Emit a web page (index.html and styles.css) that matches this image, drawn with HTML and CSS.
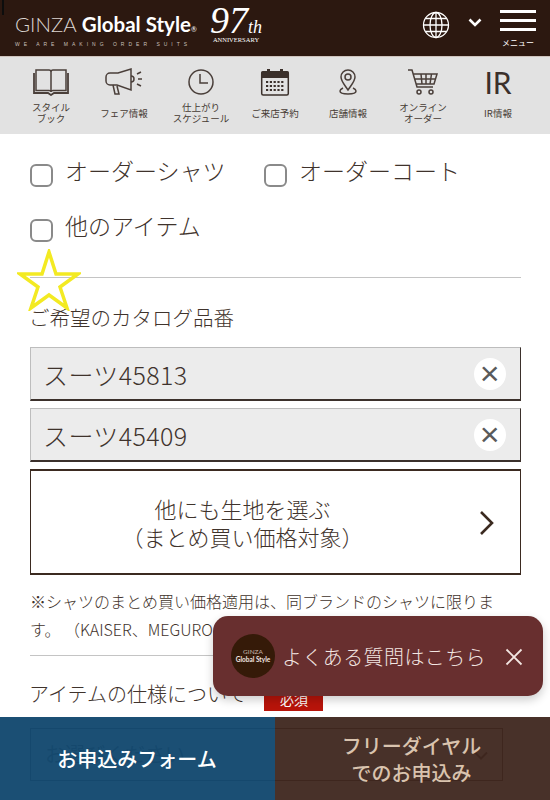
FILE: index.html
```html
<!DOCTYPE html>
<html lang="ja">
<head>
    <meta charset="UTF-8">
    <meta name="viewport" content="width=device-width, initial-scale=1.0">
    <title>GINZA Global Style</title>
    <link rel="stylesheet" href="styles.css">
</head>
<body>
    <header class="site-header">
        <div class="logo">
            <div class="logo-name"><span class="logo-thin">GINZA</span> <b>Global Style</b><small>®</small></div>
            <div class="logo-tag">WE ARE MAKING ORDER SUITS</div>
        </div>
        <div class="anniv">
            <div class="anniv-num">97<i>th</i></div>
            <div class="anniv-text">ANNIVERSARY</div>
        </div>
        <div class="header-right">
            <svg class="globe" viewBox="0 0 28 28" fill="none" stroke="#fff" stroke-width="1.3">
                <circle cx="14" cy="14" r="12.5"/>
                <ellipse cx="14" cy="14" rx="6" ry="12.5"/>
                <path d="M14 1.5v25M1.5 14h25M3.4 7.5h21.2M3.4 20.5h21.2"/>
            </svg>
            <svg class="caret" viewBox="0 0 14 10" fill="none" stroke="#fff" stroke-width="2.6">
                <path d="M1.5 1.5 7 7l5.500-5.500"/>
            </svg>
            <div class="menu-btn">
                <span></span><span></span><span></span>
                <em>メニュー</em>
            </div>
        </div>
    </header>

    <nav class="icon-nav">
        <a class="nav-item">
            <svg viewBox="0 0 36 28" fill="none" stroke="#4a3f3a" stroke-width="1.5">
                <path d="M3 2h13c1.500 0 2 1 2 2v20c0-1-.8-1.500-2-1.500H3zM33 2H20c-1.500 0-2 1-2 2v20c0-1 .8-1.500 2-1.500h13z"/>
                <path d="M1 5v20h14l3 2 3-2h14V5" stroke-width="1.800"/>
            </svg>
            <span>スタイル<br>ブック</span>
        </a>
        <a class="nav-item">
            <svg class="wide-icon" viewBox="0 0 40 28" fill="none" stroke="#4a3f3a" stroke-width="1.5">
                <path d="M27 1v21L13 17H6a4 4 0 0 1-4-4V9a4 4 0 0 1 4-4h8z"/>
                <path d="M9 17l2 9h4l-2-8M27 8c2 0 3 1 3 3s-1 3-3 3M33 6l4-2M34 11h4M33 16l4 2"/>
            </svg>
            <span>フェア情報</span>
        </a>
        <a class="nav-item">
            <svg viewBox="0 0 28 28" fill="none" stroke="#4a3f3a" stroke-width="1.5">
                <circle cx="14" cy="14" r="12"/>
                <path d="M13 6v9h8"/>
            </svg>
            <span>仕上がり<br>スケジュール</span>
        </a>
        <a class="nav-item">
            <svg viewBox="0 0 30 28">
                <path fill="#3b302b" d="M1 5a2 2 0 0 1 2-2h4V1h3v2h10V1h3v2h4a2 2 0 0 1 2 2v5H1z"/>
                <rect x="1.700" y="4" width="26.600" height="23" rx="1.500" fill="none" stroke="#3b302b" stroke-width="1.500"/>
                <path stroke="#3b302b" stroke-width="2.200" stroke-dasharray="2.200 1.600" d="M6 14h18M6 18h18M6 22h18"/>
            </svg>
            <span>ご来店予約</span>
        </a>
        <a class="nav-item">
            <svg viewBox="0 0 24 28" fill="none" stroke="#4a3f3a" stroke-width="1.500">
                <path d="M12 22C8 16 5 13 5 9a7 7 0 0 1 14 0c0 4-3 7-7 13z"/>
                <circle cx="12" cy="9" r="3"/>
                <path d="M7 20c-2 1-3 2-3 3 0 2 4 3 8 3s8-1 8-3c0-1-1-2-3-3"/>
            </svg>
            <span>店舗情報</span>
        </a>
        <a class="nav-item">
            <svg viewBox="0 0 32 28" fill="none" stroke="#4a3f3a" stroke-width="1.500">
                <path d="M1 2h4l5 17h16M6.500 6H30l-3 10H9.500M14 6l1 10M19 6v10M24.500 6l-1.500 10M8 11h20.500"/>
                <circle cx="12" cy="24" r="2"/>
                <circle cx="24" cy="24" r="2"/>
            </svg>
            <span>オンライン<br>オーダー</span>
        </a>
        <a class="nav-item">
            <div class="ir-mark">IR</div>
            <span>IR情報</span>
        </a>
    </nav>

    <main class="content">
        <div class="check-row">
            <label class="check check-wide"><i class="box"></i>オーダーシャツ</label>
            <label class="check"><i class="box"></i>オーダーコート</label>
        </div>
        <div class="check-row">
            <label class="check"><i class="box"></i>他のアイテム</label>
        </div>
        <hr class="rule rule-top">

        <h3 class="field-title">ご希望のカタログ品番</h3>
        <div class="picked">スーツ45813<span class="clear">×</span></div>
        <div class="picked">スーツ45409<span class="clear">×</span></div>
        <a class="more-btn">
            他にも生地を選ぶ<br>（まとめ買い価格対象）
            <svg viewBox="0 0 16 26" fill="none" stroke="#3b2a20" stroke-width="2.600">
                <path d="M2 2l11 11L2 24"/>
            </svg>
        </a>
        <p class="note">※シャツのまとめ買い価格適用は、同ブランドのシャツに限ります。 （KAISER、MEGURO、その他）</p>
        <hr class="rule">

        <div class="spec-title">アイテムの仕様について<span class="required">必須</span></div>
        <div class="select-box">
            お選びください
            <svg viewBox="0 0 14 10" fill="none" stroke="#3b302b" stroke-width="2">
                <path d="M1 1.500l6 6 6-6"/>
            </svg>
        </div>
    </main>

    <!-- overlays -->
    <svg class="star" viewBox="0 0 64 62" fill="none" stroke="#f3ea22" stroke-width="3.500">
        <path d="M32 3l7 22h22L43 38l7 21-18-13-18 13 7-21L3 25h22z"/>
    </svg>

    <div class="faq-pop">
        <div class="faq-logo"><span>GINZA</span><b>Global Style</b></div>
        <div class="faq-text">よくある質問はこちら</div>
        <svg class="faq-close" viewBox="0 0 18 18" fill="none" stroke="#f3e6e2" stroke-width="1.800">
            <path d="M1.500 1.500l15 15M16.500 1.500l-15 15"/>
        </svg>
    </div>

    <div class="bottom-bar">
        <a class="bar-btn bar-form">お申込みフォーム</a>
        <a class="bar-btn bar-tel">フリーダイヤル<br>でのお申込み</a>
    </div>
</body>
</html>
```

FILE: styles.css
```css
/* Reset and basic layout */
* {
    margin: 0;
    padding: 0;
    box-sizing: border-box;
}

body {
    font-family: "Noto Sans CJK JP", "Noto Sans", sans-serif;
    width: 550px;
    height: 800px;
    position: relative;
    overflow: hidden;
    background-color: #fff;
    color: #3f332c;
}

/* Header */
.site-header {
    height: 57px;
    background-color: #2c1810;
    color: #fff;
    display: flex;
    align-items: flex-start;
    padding-left: 15px;
    border-bottom: 1px solid #cfc4bd;
    position: relative;
}

.site-header::before {
    content: "";
    position: absolute;
    left: 2px;
    top: 0;
    width: 2px;
    height: 15px;
    background-color: #0d0d0d;
}

.logo {
    width: 190px;
    padding-top: 12px;
}

.logo-name {
    font-family: Lato, "Noto Sans", sans-serif;
    font-size: 20.500px;
    line-height: 24px;
    white-space: nowrap;
}

.logo-thin {
    font-weight: 300;
    color: #ddd6d2;
}

.logo-name b {
    font-weight: 700;
}

.logo-name small {
    font-size: 7px;
}

.logo-tag {
    font-family: "Liberation Sans", sans-serif;
    font-size: 5px;
    letter-spacing: 4px;
    line-height: 7px;
    color: #c9c0bb;
    white-space: nowrap;
}

.anniv {
    width: 56px;
    margin-left: 3px;
    padding-top: 5px;
    font-family: "Liberation Serif", serif;
    text-align: center;
}

.anniv-num {
    height: 31px;
    font-size: 38px;
    font-style: italic;
    line-height: 31px;
    white-space: nowrap;
}

.anniv-num i {
    font-size: 18px;
}

.anniv-text {
    font-size: 6.500px;
    line-height: 8px;
    white-space: nowrap;
}

.header-right {
    margin-left: auto;
    display: flex;
    align-items: flex-start;
}

.globe {
    width: 28px;
    height: 28px;
    margin-top: 11px;
}

.caret {
    width: 14px;
    height: 10px;
    margin: 18px 0 0 18px;
}

.menu-btn {
    width: 36px;
    margin: 10px 14px 0 18px;
    display: flex;
    flex-direction: column;
    align-items: center;
}

.menu-btn span {
    display: block;
    width: 36px;
    height: 3px;
    background-color: #fff;
    margin-bottom: 6px;
}

.menu-btn em {
    font-style: normal;
    font-size: 8px;
    line-height: 10px;
    margin-top: 1px;
}

/* Icon nav */
.icon-nav {
    height: 77px;
    background-color: #e2e2e2;
    display: grid;
    grid-template-columns: 66px 80px 74px 74px 72px 78px 1fr;
    padding: 11px 16px 0 18px;
}

.nav-item {
    display: flex;
    flex-direction: column;
    align-items: center;
    font-size: 9.500px;
    line-height: 11px;
    text-align: center;
    color: #453a33;
}

.nav-item svg {
    height: 28px;
    width: 36px;
}

.nav-item .wide-icon {
    width: 40px;
}

.nav-item span {
    height: 24px;
    margin-top: 5px;
    display: flex;
    align-items: center;
}

.ir-mark {
    font-family: Lato, sans-serif;
    font-size: 30px;
    line-height: 28px;
    color: #3b302b;
}

/* Form content */
.content {
    padding: 20px 29px 0 30px;
}

.check-row {
    display: flex;
    height: 55px;
}

.check {
    display: flex;
    align-items: flex-start;
    font-size: 23px;
    font-weight: 300;
    line-height: 32px;
}

.check-wide {
    width: 234px;
}

.box {
    width: 23px;
    height: 23px;
    border: 2px solid #8a8a8a;
    border-radius: 6px;
    margin: 10px 12px 0 0;
}

.rule {
    border: none;
    border-top: 1px solid #c4c4c4;
}

.rule-top {
    margin-top: 13px;
}

.field-title {
    font-size: 20.500px;
    font-weight: 300;
    line-height: 28px;
    margin: 25px 0 16px -1px;
}

.picked {
    height: 54px;
    margin-bottom: 7px;
    padding: 0 14px 0 12px;
    background-color: #ececec;
    border: 1px solid #3b302b;
    border-top-color: #bdbdbd;
    border-left-color: #bdbdbd;
    border-bottom-width: 2px;
    font-size: 25px;
    font-weight: 300;
    letter-spacing: .4px;
    display: flex;
    align-items: center;
    justify-content: space-between;
    color: #3f332c;
}

.clear {
    width: 32px;
    height: 32px;
    border-radius: 50%;
    background-color: #fff;
    color: #5a5a5a;
    font-family: "Liberation Sans", sans-serif;
    font-size: 34px;
    font-weight: 400;
    line-height: 31px;
    text-align: center;
}

.more-btn {
    height: 106px;
    border: 2px solid #3b2a20;
    border-width: 2px 1px;
    display: block;
    position: relative;
    padding: 23px 66px 0 0;
    font-size: 22px;
    font-weight: 300;
    line-height: 28px;
    text-align: center;
    color: #3f332c;
}

.more-btn svg {
    position: absolute;
    right: 25px;
    top: 39px;
    width: 16px;
    height: 26px;
}

.note {
    font-size: 16px;
    font-weight: 300;
    line-height: 28px;
    margin: 12px 0;
    color: #3f332c;
}

.spec-title {
    font-size: 20px;
    font-weight: 300;
    line-height: 28px;
    margin-top: 24px;
    margin-left: -1px;
    display: flex;
    align-items: flex-start;
}

.required {
    width: 59px;
    height: 22px;
    margin-left: 18px;
    margin-top: 9px;
    background-color: #b8140a;
    color: #fff;
    font-size: 14px;
    font-weight: 400;
    line-height: 21px;
    text-align: center;
}

.select-box {
    width: 473px;
    height: 53px;
    margin-top: 17px;
    border: 1px solid #3b302b;
    font-size: 20px;
    line-height: 50px;
    padding-left: 14px;
    position: relative;
}

.select-box svg {
    position: absolute;
    right: 14px;
    top: 22px;
    width: 14px;
    height: 10px;
}

/* Overlays */
.star {
    position: absolute;
    left: 17px;
    top: 249px;
    width: 64px;
    height: 62px;
}

.faq-pop {
    position: absolute;
    left: 213px;
    top: 616px;
    width: 330px;
    height: 80px;
    background-color: #682f2f;
    border-radius: 15px;
    box-shadow: 0 4px 10px rgba(0, 0, 0, 0.2);
    display: flex;
    align-items: center;
    padding-left: 18px;
    color: #f3e6e2;
}

.faq-logo {
    width: 44px;
    height: 44px;
    border-radius: 50%;
    background-color: #351a08;
    display: flex;
    flex-direction: column;
    align-items: center;
    justify-content: center;
    font-family: Lato, sans-serif;
    font-size: 6.500px;
    line-height: 8px;
    white-space: nowrap;
}

.faq-logo span {
    color: #c5b5ac;
}

.faq-text {
    margin-left: 7px;
    font-size: 20px;
    font-weight: 300;
    letter-spacing: .4px;
    white-space: nowrap;
}

.faq-close {
    position: absolute;
    right: 20px;
    top: 32px;
    width: 18px;
    height: 18px;
}

.bottom-bar {
    position: absolute;
    left: 0;
    bottom: 0;
    width: 550px;
    height: 83px;
    display: flex;
}

.bar-btn {
    width: 275px;
    height: 83px;
    display: flex;
    align-items: center;
    justify-content: center;
    text-align: center;
}

.bar-form {
    background-color: rgba(20, 73, 112, 0.97);
    color: #fff;
    font-size: 20px;
    font-weight: 500;
    padding-right: 1px;
}

.bar-tel {
    background-color: rgba(62, 38, 30, 0.95);
    color: #d9c3ae;
    font-size: 20px;
    font-weight: 500;
    line-height: 27px;
    padding-right: 2px;
}
```
